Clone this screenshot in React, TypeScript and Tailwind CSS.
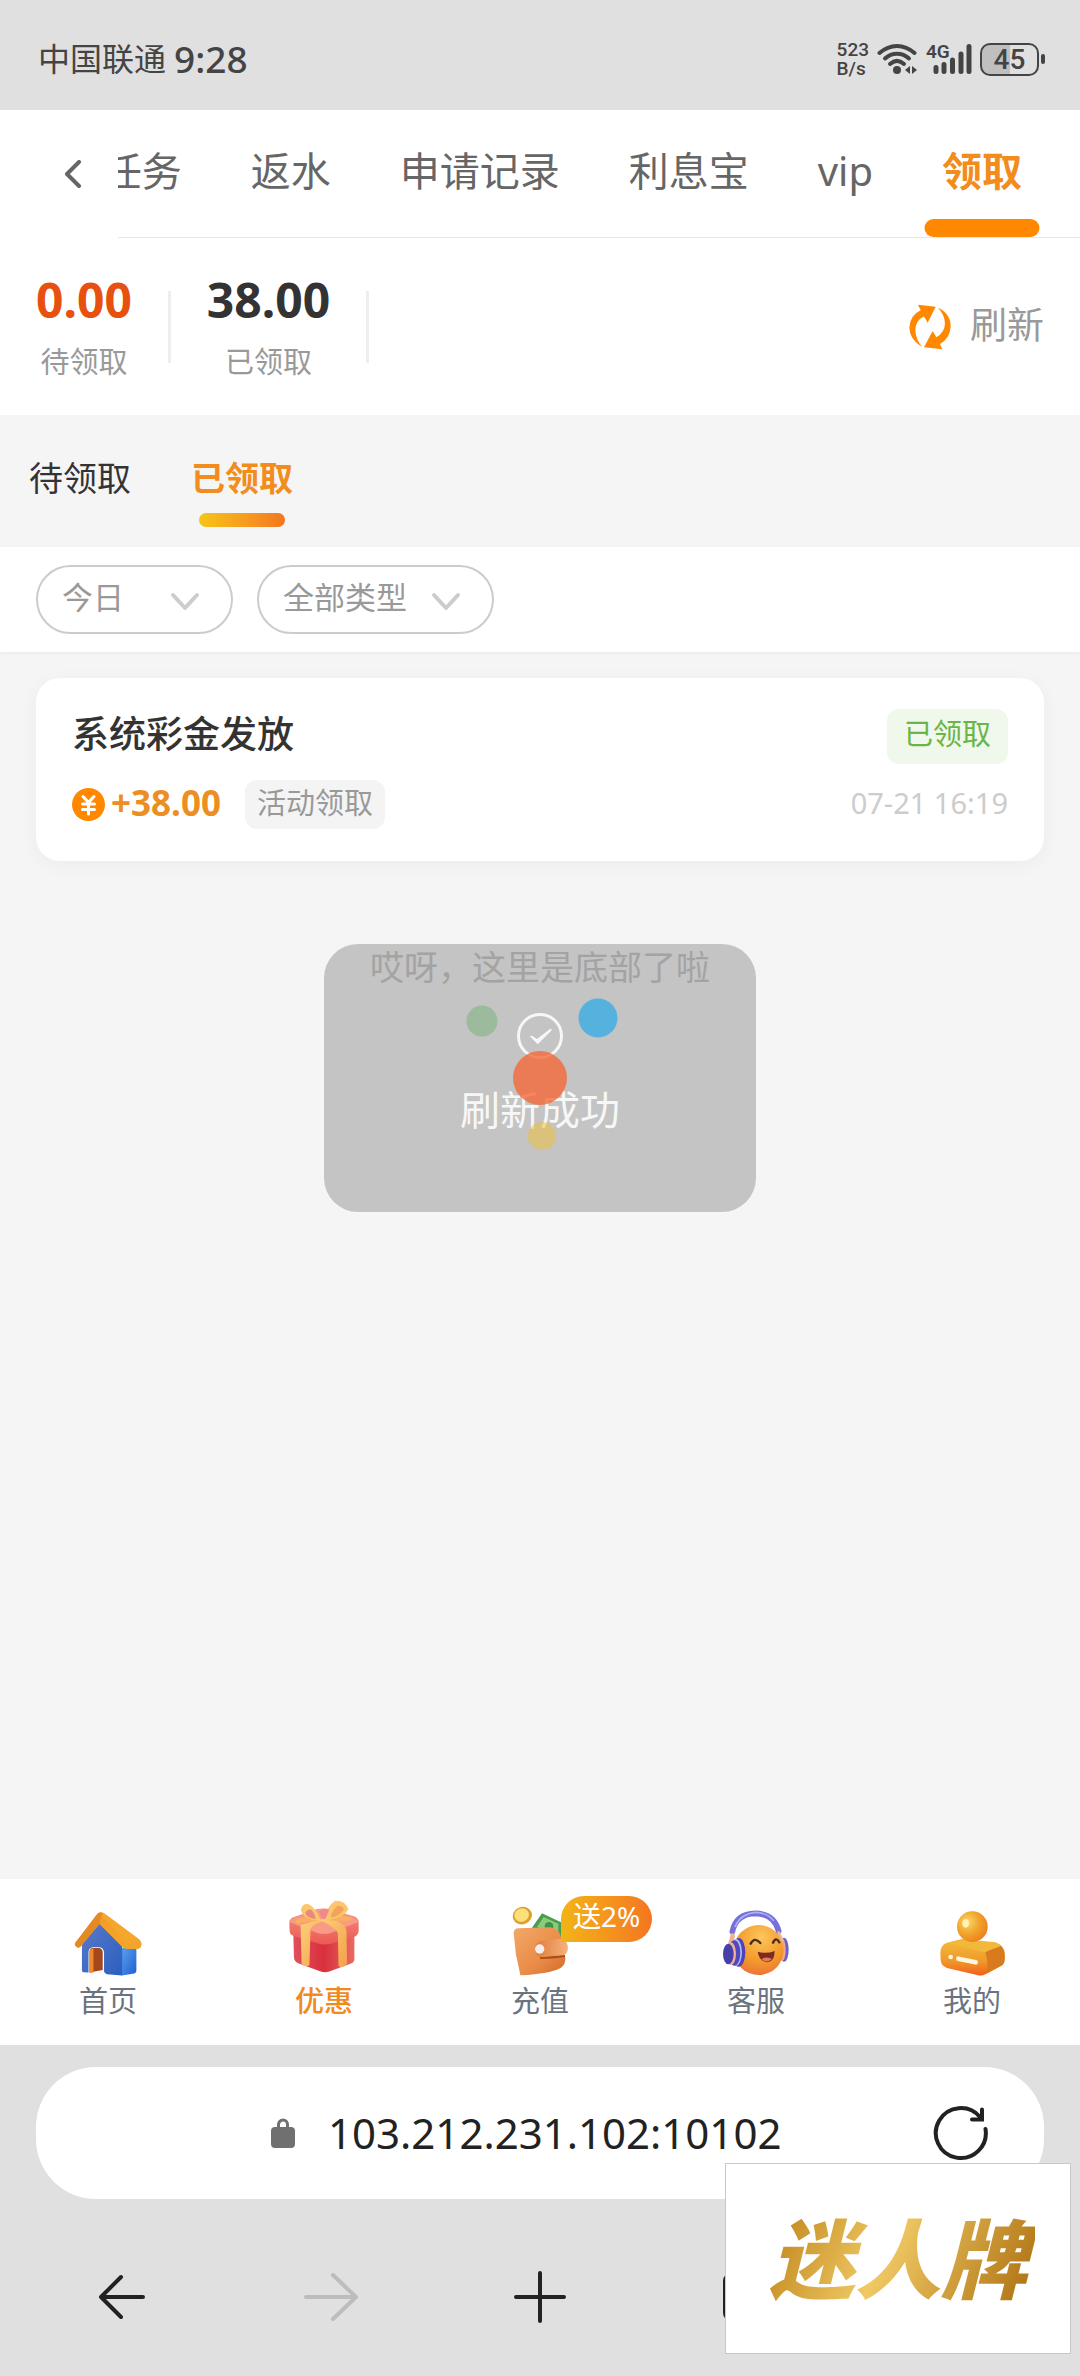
import React from 'react';

const tabs = ['任务', '返水', '申请记录', '利息宝', 'vip', '领取'];

const WifiIcon = () => (
  <svg width="41" height="32" viewBox="0 0 41 32" fill="none" stroke="#444" strokeWidth="4" strokeLinecap="round">
    <path d="M2.500 10C13 0.500 27 0.500 37.500 10" />
    <path d="M8 15.500C15 9 25 9 32 15.500" />
    <path d="M13 21C17.500 17 22.500 17 27 21" />
    <circle cx="20" cy="27" r="4" fill="#444" stroke="none" />
    <path d="M28 27l5-4v8zM40 27l-5-4v8z" fill="#444" stroke="none" />
  </svg>
);

const SignalIcon = () => (
  <svg className="overflow-visible" width="46" height="32" viewBox="0 0 46 32" fill="none" stroke="#444" strokeWidth="5" strokeLinecap="round">
    <path d="M10 24.500v4M18 21.500v7M26.500 17v11.500M35 11v17.500M43 3.500v25" />
    <text x="0" y="15" fontSize="19" fontWeight="600" fontFamily="Roboto, sans-serif" fill="#444" stroke="none">4G</text>
  </svg>
);

const StatusBar = () => (
  <div className="flex h-[110px] items-center justify-between bg-[#e0e0e0] pt-2 pr-[35px] pl-[38px] text-[#444]">
    <div className="flex items-center gap-2">
      <span className="text-[32px] leading-[48px]">中国联通</span>
      <span className="text-[37px] leading-[48px] font-medium">9:28</span>
    </div>
    <div className="flex items-center gap-2">
      <div className="font-[Roboto] text-[19px] leading-[19px] font-medium">
        <div>523</div>
        <div>B/s</div>
      </div>
      <WifiIcon />
      <SignalIcon />
      <div className="flex items-center gap-[2px]">
        <div className="h-[33px] w-[59px] rounded-[10px] border-2 border-[#444] bg-linear-to-r from-[#bfbfbf] from-50% to-transparent to-50% text-center font-[Roboto] text-[28px] leading-[30px] font-medium">
          45
        </div>
        <div className="h-[10px] w-1 rounded-sm bg-[#444]"></div>
      </div>
    </div>
  </div>
);

const TabHeader = () => (
  <header className="flex bg-white">
    <button type="button" aria-label="返回" className="flex w-[118px] shrink-0 items-center justify-center pl-7">
      <svg width="18" height="28" viewBox="0 0 18 28" fill="none" stroke="#666" strokeWidth="4" strokeLinecap="round" strokeLinejoin="round">
        <path d="M15 2L3 14l12 12" />
      </svg>
    </button>
    <nav className="flex min-w-0 flex-1 justify-end gap-[69px] overflow-hidden border-b border-[#e8e8e8] pr-[58px]">
      {tabs.map((tab) => {
        const isActive = tab === '领取';
        return (
          <a
            key={tab}
            href="#"
            className={`relative shrink-0 pb-[5px] text-[40px] leading-[122px] whitespace-nowrap ${isActive ? 'font-bold text-[#f28c1c]' : 'text-[#666]'}`}
          >
            {tab}
            {isActive && <span className="absolute bottom-0 left-1/2 h-[18px] w-[115px] -translate-x-1/2 rounded-full bg-[#ff8800]"></span>}
          </a>
        );
      })}
    </nav>
  </header>
);

const Summary = () => (
  <section className="flex h-[177px] items-center gap-9 bg-white px-9">
    <div className="flex flex-col items-center gap-[14px]">
      <span className="text-[48px] leading-[56px] font-bold text-[#e8500f]">0.00</span>
      <span className="text-[29px] leading-[40px] text-[#999]">待领取</span>
    </div>
    <div className="h-[72px] w-[3px] bg-[#eee]"></div>
    <div className="flex flex-col items-center gap-[14px]">
      <span className="text-[48px] leading-[56px] font-bold text-[#333]">38.00</span>
      <span className="text-[29px] leading-[40px] text-[#999]">已领取</span>
    </div>
    <div className="h-[72px] w-[3px] bg-[#eee]"></div>
    <button type="button" className="ml-auto flex items-center gap-[18px] text-[37px] leading-[50px] text-[#999]">
      <svg width="44" height="46" viewBox="1068 162 128 138" fill="#ff8800">
        <path d="M1096 164L1149 170L1125 218L1114 199Q1088 212 1088 242Q1090 270 1109 291Q1070 268 1070 233Q1072 196 1104 181Z" />
        <path d="M1169 298L1114 292L1140 243L1151 262Q1176 248 1177 220Q1176 194 1156 173Q1194 190 1194 230Q1192 264 1162 282Z" />
      </svg>
      <span className="pb-1">刷新</span>
    </button>
  </section>
);

const SubTabs = () => (
  <div className="flex items-start gap-[60px] px-[29px] pt-[38px] pb-5 text-[34px] leading-[50px]">
    <button type="button" className="text-[#333]">待领取</button>
    <button type="button" className="flex flex-col items-center gap-[10px] font-bold text-[#f28c1c]">
      已领取
      <span className="h-[14px] w-[86px] rounded-full bg-linear-to-r from-[#f5c518] to-[#f47521]"></span>
    </button>
  </div>
);

interface FilterSelectProps {
  label: string;
  value: string;
  width: string;
}

const FilterSelect: React.FC<FilterSelectProps> = ({ label, value, width }) => (
  <div className={`relative ${width}`}>
    <select
      aria-label={label}
      className="h-[69px] w-full appearance-none rounded-full border-2 border-[#ccc] bg-white pb-1 pl-6 text-[31px] text-[#999]"
    >
      <option>{value}</option>
    </select>
    <svg className="pointer-events-none absolute top-[26px] right-[33px]" width="30" height="20" viewBox="0 0 30 20" fill="none" stroke="#ccc" strokeWidth="4" strokeLinecap="round" strokeLinejoin="round">
      <path d="M3 4l12 13L27 4" />
    </svg>
  </div>
);

const RecordCard = () => (
  <article className="rounded-3xl bg-white px-9 pt-[31px] pb-8 shadow-[0_4px_20px_rgba(0,0,0,0.04)]">
    <div className="flex h-[55px] items-start justify-between">
      <h2 className="text-[37px] leading-[50px] font-medium text-[#333]">系统彩金发放</h2>
      <span className="rounded-xl bg-[#f0f8eb] px-[17px] pb-[5px] text-[29px] leading-[50px] text-[#6ab547]">已领取</span>
    </div>
    <div className="mt-4 flex h-[49px] items-start">
      <svg className="mt-2" width="33" height="33" viewBox="0 0 33 33" fill="none" stroke="#fff" strokeWidth="3" strokeLinecap="round">
        <circle cx="16.500" cy="16.500" r="16.500" fill="#ff8800" stroke="none" />
        <path d="M11 8.500l5.500 6 5.500-6M10.500 16h12M10.500 21.500h12M16.500 15v11" />
      </svg>
      <span className="ml-[6px] text-[35px] leading-[45px] font-bold text-[#ec8e22]">+38.00</span>
      <span className="ml-6 rounded-xl bg-[#f4f4f4] px-3 pb-1 text-[29px] leading-[45px] text-[#999]">活动领取</span>
      <time className="ml-auto text-[29px] leading-[45px] text-[#ccc]">07-21 16:19</time>
    </div>
  </article>
);

const RefreshToast = () => (
  <div className="pointer-events-none absolute inset-0 grid place-items-center" role="status">
    <div className="col-start-1 row-start-1 flex w-[432px] flex-col items-center rounded-[34px] bg-black/20 pt-[69px] pb-[78px] text-[#f7f7f7]">
      <svg width="46" height="46" viewBox="0 0 46 46" fill="none" stroke="currentColor" strokeWidth="3" strokeLinecap="round">
        <circle cx="23" cy="23" r="21.500" />
        <path d="M13 23.500Q14 22 16 23.500L20 26L33 16Q35 15 34.500 17.500L21.500 30.500Q20.500 31.500 19.500 30Z" fill="currentColor" stroke="none" />
      </svg>
      <p className="mt-[27px] text-[40px] leading-[48px]">刷新成功</p>
    </div>
    {/* Loader dots */}
    <svg className="col-start-1 row-start-1" width="160" height="160" viewBox="0 0 160 160">
      <circle cx="22" cy="23" r="15.500" fill="#73b173" fillOpacity="0.5" />
      <circle cx="138" cy="20" r="19.500" fill="#3aaee6" fillOpacity="0.8" />
      <circle cx="80" cy="80" r="27" fill="#f5693a" fillOpacity="0.8" />
      <circle cx="82" cy="138" r="14" fill="#efc030" fillOpacity="0.5" />
    </svg>
  </div>
);

const HouseIcon = () => (
  <svg width="68" height="65" viewBox="222 150 206 196">
    <defs>
      <linearGradient id="houseFront" x1="0" y1="0" x2="1" y2="1">
        <stop offset="0" stopColor="#5a78c8" />
        <stop offset="1" stopColor="#2a60c0" />
      </linearGradient>
      <linearGradient id="houseSide" x1="0" y1="0" x2="1" y2="1">
        <stop offset="0" stopColor="#5aa0f0" />
        <stop offset="1" stopColor="#1f5fce" />
      </linearGradient>
      <linearGradient id="houseRoof" x1="0" y1="0" x2="1" y2="1">
        <stop offset="0" stopColor="#f0982a" />
        <stop offset="1" stopColor="#f7a829" />
      </linearGradient>
    </defs>
    <path d="M366 262H411V328Q411 338 400 340L366 345Z" fill="url(#houseSide)" />
    <path d="M246 250L300 186L368 255V345L322 341Q314 340 313 332V275Q312 259 296 259H280Q266 260 266 275V336L250 335Q246 334 246 328Z" fill="url(#houseFront)" />
    <path d="M269 336V272Q270 262 280 262H298Q309 264 309 276V328Z" fill="#a3481c" />
    <path d="M269 337V272Q270 264 281 263V336Z" fill="#f08a28" />
    <path d="M226 246L293 158Q302 149 314 157L414 231Q427 238 426 252Q425 263 414 264H382Q373 263 366 256L299 189L242 257Q236 264 228 257Q222 252 226 246Z" fill="url(#houseRoof)" />
    <path d="M226 246L293 158Q300 152 307 155L299 189L242 257Q236 264 228 257Q222 252 226 246Z" fill="#e48a25" />
    <path d="M305 163L380 244Q385 250 384 264H414Q426 262 426 250Q426 240 417 234L322 163Q312 157 305 163Z" fill="#f5a62c" />
    <path d="M382 245Q400 250 425 243Q429 262 414 264H382Q371 262 366 254Q370 245 382 245Z" fill="#f2a52c" />
  </svg>
);

const GiftIcon = () => (
  <svg width="70" height="76" viewBox="864 121 212 229">
    <defs>
      <linearGradient id="giftBox" x1="0" y1="0" x2="1" y2="0">
        <stop offset="0" stopColor="#e0505c" />
        <stop offset="0.500" stopColor="#d8303c" />
        <stop offset="1" stopColor="#ea6a62" />
      </linearGradient>
      <linearGradient id="giftLid" x1="0" y1="0" x2="0" y2="1">
        <stop offset="0" stopColor="#f78e7c" />
        <stop offset="1" stopColor="#ea5a55" />
      </linearGradient>
      <linearGradient id="ribbon" x1="0" y1="0" x2="1" y2="1">
        <stop offset="0" stopColor="#fdd07a" />
        <stop offset="1" stopColor="#f3a04a" />
      </linearGradient>
    </defs>
    <path d="M877 220H1062V300Q1062 308 1052 313L986 337Q972 342 958 336L892 312Q880 306 879 295Z" fill="url(#giftBox)" />
    <path d="M865 190Q865 176 880 172L950 148Q970 143 990 150L1060 170Q1074 174 1075 188V214Q1074 226 1062 232L990 253Q970 258 952 252L880 230Q866 225 866 214Z" fill="url(#giftLid)" />
    <path d="M867 188Q868 178 880 175L950 150Q970 145 990 152L1060 173Q1072 178 1072 188L990 220Q970 226 950 220Z" fill="#f99a84" />
    <path d="M899 197Q925 190 950 178L978 184Q935 192 929 208L926 318Q912 326 902 313Z" fill="url(#ribbon)" />
    <path d="M955 180L985 176Q1036 190 1038 215L1040 312Q1026 330 1014 320L1012 222Q1008 204 955 180Z" fill="url(#ribbon)" />
    <path d="M960 182L889 191Q880 188 886 180L940 166Q960 170 960 182ZM968 180L1040 186L1058 176Q1030 166 990 168Z" fill="#f8b05e" />
    <path d="M958 184Q905 180 900 150Q904 130 923 133Q945 142 960 180Z" fill="#fbc66c" />
    <path d="M942 178Q914 172 914 158Q920 146 931 150Q942 160 945 178Z" fill="#e8897c" />
    <path d="M968 182Q980 138 1004 123Q1034 122 1044 148Q1034 172 984 181Z" fill="#fbc66c" />
    <path d="M990 174Q994 150 1012 138Q1028 138 1030 150Q1020 168 990 174Z" fill="#f2a45c" />
    <path d="M955 155Q970 142 986 150L974 178Q962 180 955 155Z" fill="#ef8a8a" />
  </svg>
);

const WalletIcon = () => (
  <svg width="56" height="70" viewBox="335 143 168 210">
    <defs>
      <linearGradient id="wallet" x1="0" y1="0" x2="1" y2="1">
        <stop offset="0" stopColor="#f3a968" />
        <stop offset="0.600" stopColor="#e98b47" />
        <stop offset="1" stopColor="#cf6a26" />
      </linearGradient>
      <linearGradient id="walletFlap" x1="0" y1="0" x2="1" y2="0">
        <stop offset="0" stopColor="#df7c3a" />
        <stop offset="1" stopColor="#f6b37c" />
      </linearGradient>
    </defs>
    <ellipse cx="366" cy="172" rx="29" ry="26" transform="rotate(-20 366 172)" fill="#dca02c" />
    <ellipse cx="364" cy="170" rx="22" ry="20" transform="rotate(-20 364 170)" fill="#fbdf78" />
    <path d="M395 208L425 165L482 192V240H400Z" fill="#4a9d4e" />
    <path d="M410 206L430 176L474 196V230Z" fill="#8ccb7a" />
    <circle cx="446" cy="204" r="13" fill="#3f9347" />
    <path d="M340 224Q340 212 352 210L450 207Q474 210 482 235L495 300Q496 318 482 328Q450 346 360 351Q352 310 347 290Z" fill="url(#wallet)" />
    <path d="M418 296L494 290L494 296Q460 302 420 302Z" fill="#a94e1c" />
    <path d="M405 265Q408 250 424 248L484 241Q499 242 503 265Q503 284 492 290L420 297Q402 292 405 265Z" fill="url(#walletFlap)" />
    <circle cx="418" cy="272" r="14" fill="#f4efec" />
  </svg>
);

const HeadsetIcon = () => (
  <svg width="66" height="66" viewBox="129 149 198 198">
    <defs>
      <radialGradient id="face" cx="0.550" cy="0.250" r="0.800">
        <stop offset="0" stopColor="#fdc65a" />
        <stop offset="0.600" stopColor="#f39a2c" />
        <stop offset="1" stopColor="#ea6f3a" />
      </radialGradient>
    </defs>
    <ellipse cx="312" cy="268" rx="14" ry="36" fill="#6a62c4" />
    <ellipse cx="307" cy="268" rx="10" ry="34" fill="#f0a890" />
    <circle cx="236" cy="269" r="75" fill="url(#face)" />
    <path d="M157 214Q168 160 226 159Q282 160 296 212" fill="none" stroke="#7a6fd8" strokeWidth="17" strokeLinecap="round" />
    <path d="M166 198Q182 160 228 156Q262 158 280 180" fill="none" stroke="#a6b4f6" strokeWidth="5" strokeLinecap="round" />
    <path d="M296 216L306 240" stroke="#eeb294" strokeWidth="8" strokeLinecap="round" />
    <path d="M158 226L150 258" stroke="#eeb294" strokeWidth="14" strokeLinecap="round" />
    <ellipse cx="176" cy="276" rx="20" ry="43" fill="#4a44b8" />
    <ellipse cx="168" cy="276" rx="18" ry="40" fill="#b6b6f2" />
    <ellipse cx="163" cy="278" rx="18" ry="38" fill="#5048bd" />
    <ellipse cx="153" cy="280" rx="15" ry="34" fill="#f0b09a" />
    <ellipse cx="145" cy="281" rx="16" ry="31" fill="#4740a6" />
    <path d="M212 250Q224 228 241 248M279 247Q288 228 298 246" fill="none" stroke="#4a2c18" strokeWidth="7" strokeLinecap="round" />
    <path d="M233 274Q258 282 284 272Q284 304 262 306Q238 304 233 274Z" fill="#7c2a22" />
    <path d="M244 297Q260 286 276 296Q262 310 244 297Z" fill="#e87a58" />
  </svg>
);

const ProfileIcon = () => (
  <svg width="65" height="65" viewBox="779 150 195 195">
    <defs>
      <radialGradient id="head" cx="0.350" cy="0.350" r="0.750">
        <stop offset="0" stopColor="#fdd66a" />
        <stop offset="0.500" stopColor="#f0a52c" />
        <stop offset="1" stopColor="#ef7a1c" />
      </radialGradient>
      <linearGradient id="body" x1="0" y1="0" x2="0" y2="1">
        <stop offset="0" stopColor="#f3bd3c" />
        <stop offset="0.600" stopColor="#f0992a" />
        <stop offset="1" stopColor="#f2601c" />
      </linearGradient>
    </defs>
    <path d="M780 275Q780 252 800 245L845 234L945 244Q972 252 973 278V296Q972 310 960 316L915 340Q905 346 890 342L800 321Q782 314 781 298Z" fill="url(#body)" />
    <path d="M915 276Q925 262 960 254Q973 264 973 282V296Q972 310 960 316L918 338Q926 300 915 276Z" fill="#d97a1c" />
    <path d="M800 247L845 235L945 245Q958 250 960 256L912 274Z" fill="#f1b83a" />
    <circle cx="876" cy="197" r="46" fill="url(#head)" />
    <ellipse cx="856" cy="187" rx="10" ry="13" fill="#fff0b8" />
    <circle cx="811" cy="288" r="7" fill="#fff6dc" />
    <path d="M834 293L886 304" stroke="#fff6dc" strokeWidth="14" strokeLinecap="round" />
  </svg>
);

const navItems = [
  { label: '首页', icon: <HouseIcon /> },
  { label: '优惠', icon: <GiftIcon />, active: true },
  { label: '充值', icon: <WalletIcon />, badge: '送2%' },
  { label: '客服', icon: <HeadsetIcon /> },
  { label: '我的', icon: <ProfileIcon /> },
];

const BottomNav = () => (
  <nav className="grid grid-cols-5 bg-white pt-[21px] pb-[19px]">
    {navItems.map((item) => (
      <a key={item.label} href="#" className="relative flex flex-col items-center">
        <span className="flex h-[76px] items-end">{item.icon}</span>
        <span className={`text-[29px] leading-[50px] ${item.active ? 'font-medium text-[#f08a1c]' : 'text-[#6b7280]'}`}>{item.label}</span>
        {item.badge && (
          <span className="absolute -top-1 left-1/2 ml-[21px] h-[46px] rounded-full rounded-bl-none bg-linear-to-r from-[#f2b416] to-[#f47521] px-3 text-[28px] leading-[40px] whitespace-nowrap text-white">
            {item.badge}
          </span>
        )}
      </a>
    ))}
  </nav>
);

const BrowserBar = () => (
  <footer className="relative bg-[#e0e0e0] px-[17px] pt-[22px] pb-[53px]">
    <div className="mx-[19px] flex h-[132px] items-center rounded-[60px] bg-white pr-[55px] pl-[86px]">
      <div className="flex flex-1 items-center justify-center gap-[33px]">
        <svg width="24" height="30" viewBox="0 0 24 30">
          <path d="M7.500 12V6.500a4.500 4.500 0 0 1 9 0V12" fill="none" stroke="#707070" strokeWidth="3" />
          <rect y="9" width="24" height="21" rx="4" fill="#707070" />
        </svg>
        <input
          aria-label="网址"
          defaultValue="103.212.231.102:10102"
          className="w-[456px] bg-transparent text-[42px] leading-[60px] text-[#222] outline-none"
        />
      </div>
      <button type="button" aria-label="刷新页面">
        <svg width="56" height="56" viewBox="0 0 56 56" fill="none" stroke="#222" strokeWidth="4" strokeLinecap="round">
          <path d="M52.500 24A25 25 0 1 1 47 12" />
          <path d="M39 14.500h10v-10" />
        </svg>
      </button>
    </div>
    <div className="mt-[72px] grid h-[52px] grid-cols-5 place-items-center">
      <button type="button" aria-label="后退">
        <svg width="48" height="52" viewBox="0 0 48 52" fill="none" stroke="#222" strokeWidth="4" strokeLinecap="round" strokeLinejoin="round">
          <path d="M45 26H3M23 6L3 26l20 20" />
        </svg>
      </button>
      <button type="button" aria-label="前进">
        <svg width="56" height="52" viewBox="0 0 56 52" fill="none" stroke="#bdbdbd" strokeWidth="4" strokeLinecap="round" strokeLinejoin="round">
          <path d="M3 26h50M30 4l23 22-23 22" />
        </svg>
      </button>
      <button type="button" aria-label="新建标签页">
        <svg width="54" height="52" viewBox="0 0 54 52" fill="none" stroke="#222" strokeWidth="4" strokeLinecap="round">
          <path d="M3 26h48M27 2v48" />
        </svg>
      </button>
      <button type="button" aria-label="标签页">
        <svg width="52" height="52" viewBox="0 0 52 52" fill="none" stroke="#222" strokeWidth="4">
          <rect x="2" y="4" width="48" height="44" rx="6" />
        </svg>
      </button>
    </div>
    <div className="absolute right-[9px] bottom-[22px] flex h-[191px] w-[346px] items-center justify-center border border-[#c8c8c8] bg-white">
      <span className="bg-linear-[115deg] from-[#b87a10] via-[#f0c964] via-45% to-[#a86a0c] bg-clip-text px-2 text-[86px] leading-[120px] font-black text-transparent italic">
        迷人牌
      </span>
    </div>
  </footer>
);

export default function App() {
  return (
    <div className="flex min-h-screen flex-col bg-[#f5f5f5] font-['Noto_Sans','Noto_Sans_CJK_SC',sans-serif]">
      <StatusBar />
      <div className="relative flex flex-1 flex-col">
        <TabHeader />
        <Summary />
        <SubTabs />
        <div className="flex gap-6 bg-white px-9 py-[18px] shadow-[0_1px_4px_rgba(0,0,0,0.06)]">
          <FilterSelect label="日期" value="今日" width="w-[197px]" />
          <FilterSelect label="类型" value="全部类型" width="w-[237px]" />
        </div>
        <main className="flex-1 px-9 pt-[26px]">
          <RecordCard />
          <p className="mt-[81px] text-center text-[34px] leading-[50px] text-[#ccc]">哎呀，这里是底部了啦</p>
        </main>
        <BottomNav />
        <RefreshToast />
      </div>
      <BrowserBar />
    </div>
  );
}
